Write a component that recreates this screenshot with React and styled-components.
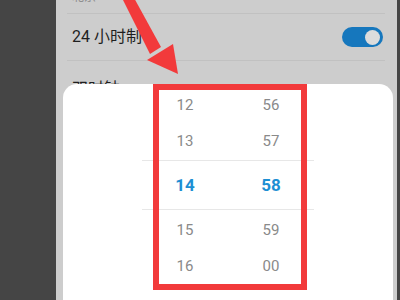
import React from "react";
import styled, { createGlobalStyle } from "styled-components";

const Global = createGlobalStyle`
  html, body { margin: 0; padding: 0; width: 400px; height: 300px; overflow: hidden; background: #444; }
  * { box-sizing: border-box; }
`;

const Frame = styled.div`
  position: relative;
  display: flex;
  width: 400px;
  height: 300px;
  overflow: hidden;
  background: #454545;
  font-family: Roboto, "Noto Sans CJK SC", "Noto Sans", sans-serif;
`;

const Bezel = styled.div`
  flex: 0 0 ${(p) => p.$w}px;
  background: #454545;
`;

const Screen = styled.div`
  flex: 0 0 341px;
  display: flex;
  flex-direction: column;
  background: #cdcdcd;
`;

const SettingsList = styled.div`
  flex: 0 0 84px;
  overflow: hidden;
  margin: 0 12px 0 11px;
`;

const SettingRow = styled.div`
  height: 47px;
  display: flex;
  align-items: ${(p) => (p.$top ? "flex-start" : "center")};
  justify-content: space-between;
  padding: ${(p) => (p.$top ? `${p.$top}px` : "0")} 2px ${(p) => (p.$bottom ? `${p.$bottom}px` : "0")} 5px;
  border-bottom: 1px solid #c1c1c1;
  &:first-child { margin-top: -33px; }
`;

const TextBlock = styled.div`
  display: flex;
  flex-direction: column;
`;

const Title = styled.div`
  font-size: 16px;
  line-height: 20px;
  color: #1f1f1f;
`;

const Subtitle = styled.div`
  font-size: 12px;
  line-height: 16px;
  color: #8e8e8e;
`;

const Toggle = styled.div`
  width: 41px;
  height: 20px;
  border-radius: 10px;
  background: #1677bd;
  display: flex;
  align-items: center;
  justify-content: flex-end;
  padding-right: 3px;
`;

const Knob = styled.div`
  width: 15px;
  height: 15px;
  border-radius: 50%;
  background: #dcdcdc;
`;

const Sheet = styled.div`
  flex: 1;
  margin: 0 4px 0 7px;
  background: #ffffff;
  border-radius: 14px 14px 0 0;
  padding-top: 3px;
  display: flex;
  flex-direction: column;
  align-items: center;
`;

const PickerRow = styled.div`
  display: grid;
  grid-template-columns: 86px 86px;
  width: 172px;
  height: ${(p) => (p.$active ? 50 : 36)}px;
  align-items: center;
  justify-items: center;
  border-top: ${(p) => (p.$active ? "1px solid #e7e7e7" : "none")};
  border-bottom: ${(p) => (p.$active ? "1px solid #e7e7e7" : "none")};
  margin: ${(p) => (p.$active ? "1px 0 2px" : "0")};
`;

const Digit = styled.span`
  font-size: ${(p) => (p.$active ? 17 : 15)}px;
  font-weight: ${(p) => (p.$active ? 700 : 400)};
  color: ${(p) => (p.$active ? "#1d8fd3" : "#8a8a8a")};
`;

const Highlight = styled.div`
  position: absolute;
  left: 153px;
  top: 84px;
  width: 154px;
  height: 206px;
  border: 6px solid #f23a3b;
  pointer-events: none;
`;

const Arrow = styled.svg`
  position: absolute;
  left: 0;
  top: 0;
  pointer-events: none;
`;

const rows = [
  ["12", "56"],
  ["13", "57"],
  ["14", "58", true],
  ["15", "59"],
  ["16", "00"],
];

export default function App() {
  return (
    <>
      <Global />
      <Frame>
        <Bezel $w={56} />
        <Screen>
          <SettingsList>
            <SettingRow $top={2} $bottom={8}>
              <TextBlock>
                <Title>时区</Title>
                <Subtitle>北京</Subtitle>
              </TextBlock>
            </SettingRow>
            <SettingRow>
              <Title>24 小时制</Title>
              <Toggle>
                <Knob />
              </Toggle>
            </SettingRow>
            <SettingRow $top={18}>
              <Title>双时钟</Title>
            </SettingRow>
          </SettingsList>
          <Sheet>
            {rows.map(([h, m, active]) => (
              <PickerRow key={h} $active={active}>
                <Digit $active={active}>{h}</Digit>
                <Digit $active={active}>{m}</Digit>
              </PickerRow>
            ))}
          </Sheet>
        </Screen>
        <Bezel $w={3} />
        <Highlight />
        <Arrow width="400" height="300" viewBox="0 0 400 300">
          <polygon points="121,-4 133,-4 161,47 150,54" fill="#f23a3b" />
          <polygon points="147,60 173,44 178,74" fill="#f23a3b" />
        </Arrow>
      </Frame>
    </>
  );
}
